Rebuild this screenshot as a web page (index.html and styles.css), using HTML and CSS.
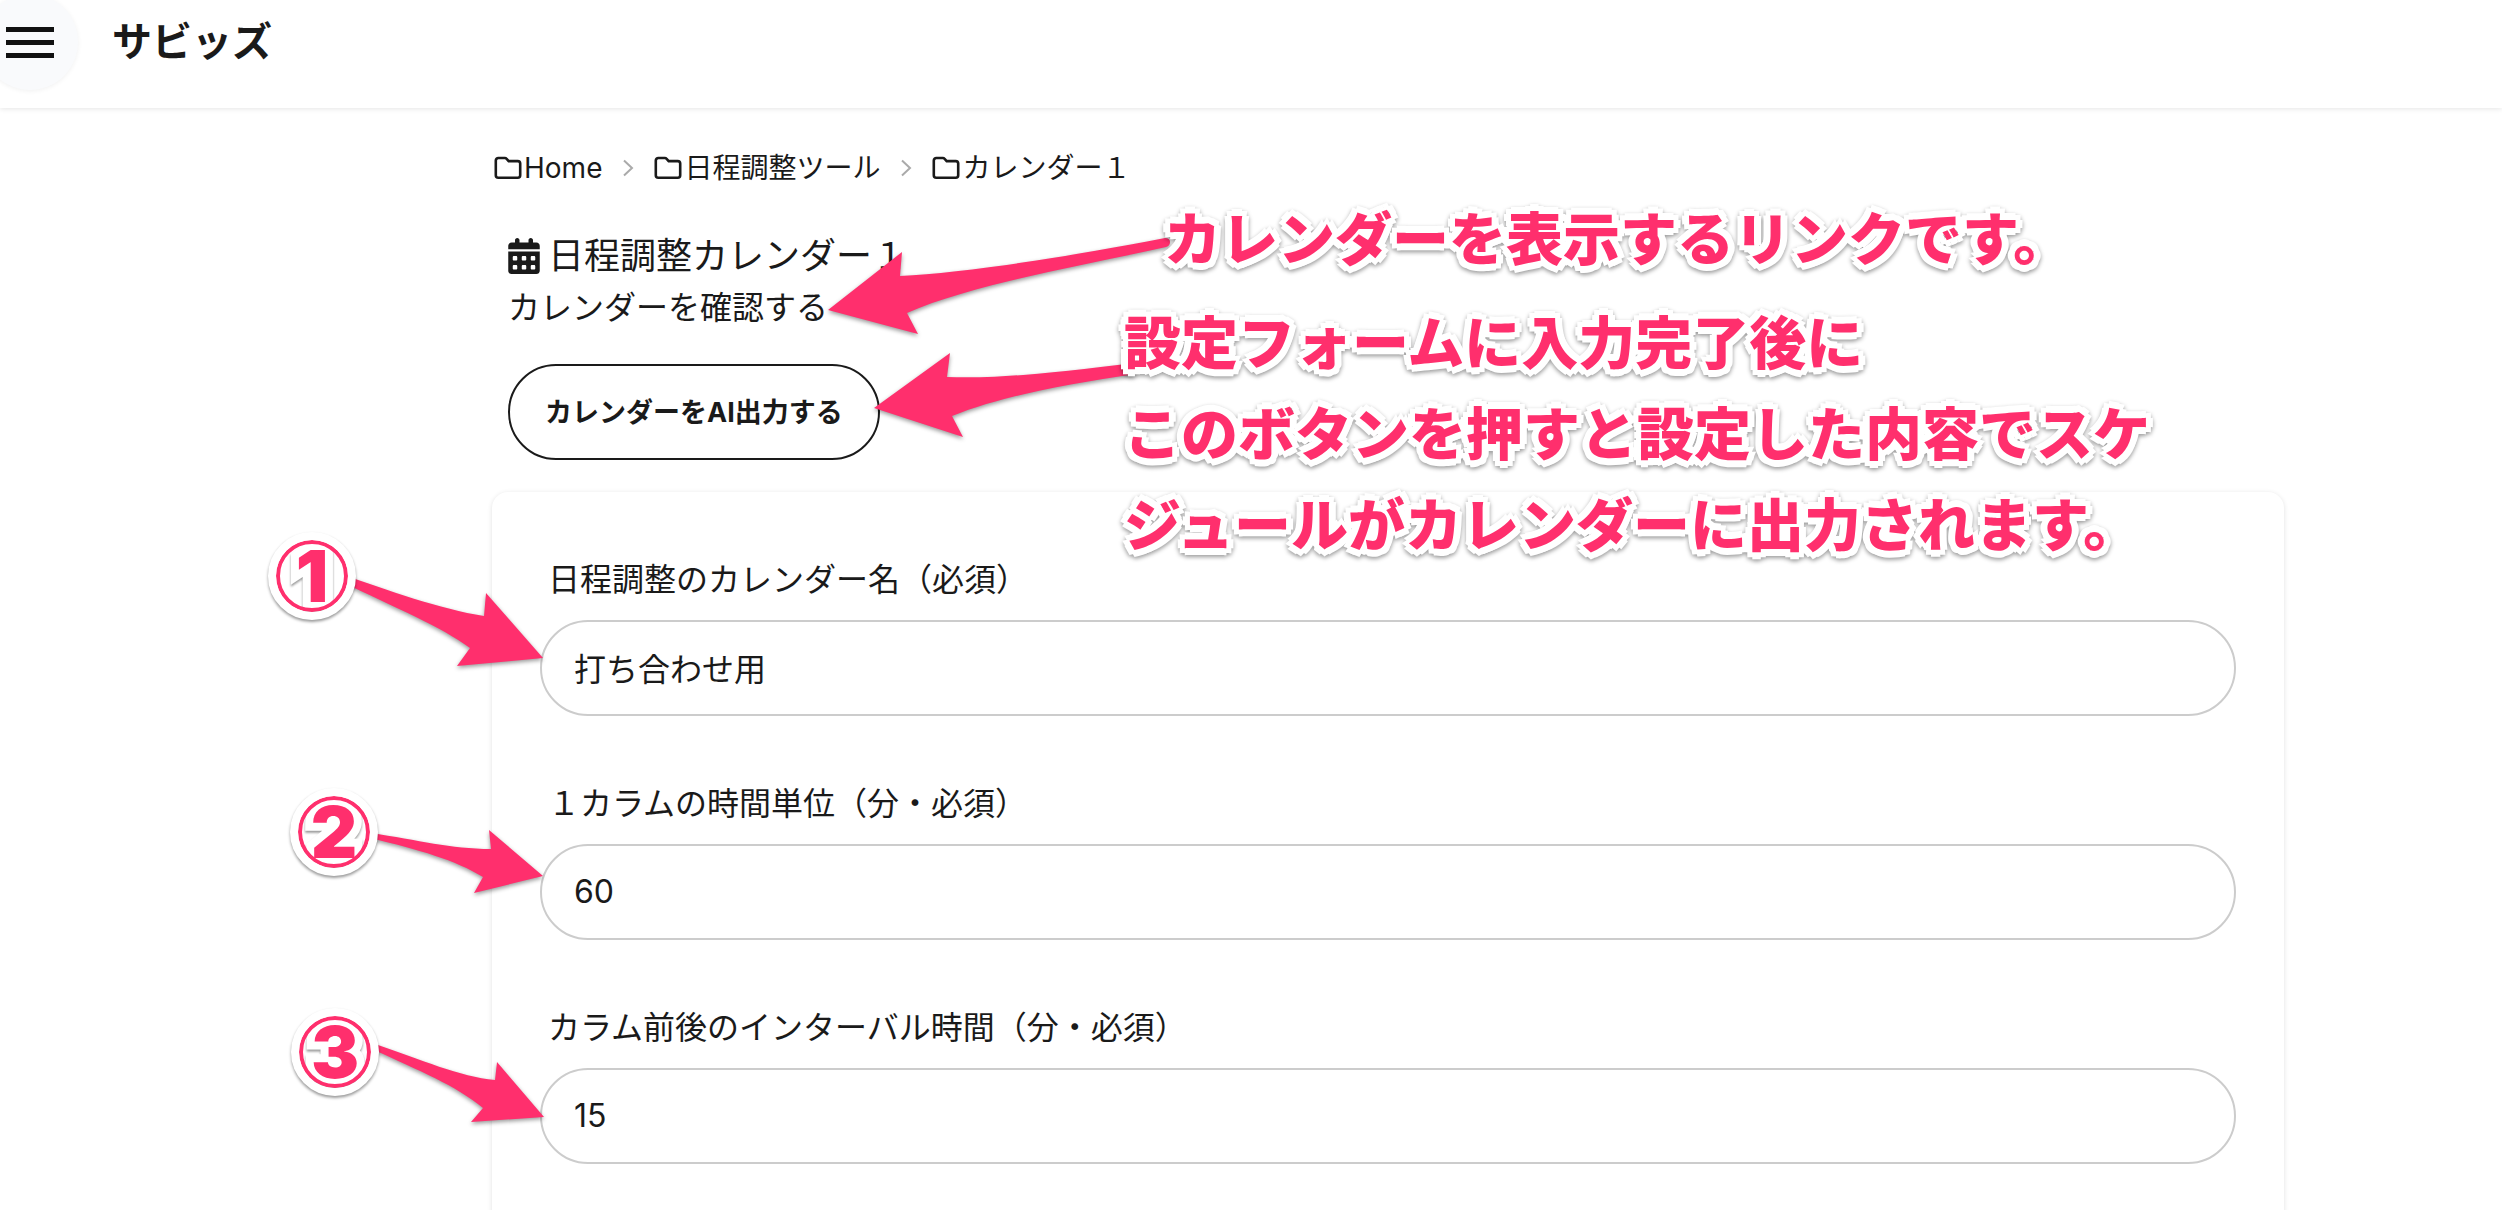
FILE: index.html
```html
<!DOCTYPE html>
<html lang="ja">
<head>
    <meta charset="UTF-8">
    <meta name="viewport" content="width=device-width, initial-scale=1.0">
    <title>サビッズ</title>
    <link rel="stylesheet" href="styles.css">
</head>
<body>
    <header class="header">
        <button type="button" class="menu-button" aria-label="menu">
            <span class="menu-line"></span>
            <span class="menu-line"></span>
            <span class="menu-line"></span>
        </button>
        <h1 class="site-name">サビッズ</h1>
    </header>

    <!-- folder icon used in the breadcrumb -->
    <svg class="symbols" aria-hidden="true">
        <symbol id="folder" viewBox="0 0 28 28">
            <path d="M1.800 6.500a2.500 2.500 0 0 1 2.500-2.500h6.600a2 2 0 0 1 1.500.7l2.300 2.400h9a2.500 2.500 0 0 1 2.500 2.500v11.700a2.500 2.500 0 0 1-2.500 2.500H4.300a2.500 2.500 0 0 1-2.500-2.500z" fill="none" stroke="#1a1a1a" stroke-width="2.600"/>
        </symbol>
        <symbol id="chevron" viewBox="0 0 14 20">
            <path d="M3 2.500l8 7.500-8 7.500" fill="none" stroke="#aaa" stroke-width="2"/>
        </symbol>
    </svg>

    <main class="main">
        <nav class="breadcrumb">
            <a href="#"><svg class="folder"><use href="#folder"/></svg>Home</a>
            <svg class="chevron"><use href="#chevron"/></svg>
            <a href="#"><svg class="folder"><use href="#folder"/></svg>日程調整ツール</a>
            <svg class="chevron"><use href="#chevron"/></svg>
            <a href="#"><svg class="folder"><use href="#folder"/></svg>カレンダー１</a>
        </nav>

        <div class="intro">
            <h2 class="page-title">
                <svg class="calendar" viewBox="0 0 448 512"><path fill="#1a1a1a" d="M128 0c17.700 0 32 14.300 32 32v32h128V32c0-17.700 14.300-32 32-32s32 14.300 32 32v32h48c26.500 0 48 21.500 48 48v48H0v-48c0-26.500 21.500-48 48-48h48V32c0-17.700 14.300-32 32-32zM0 192h448v272c0 26.500-21.500 48-48 48H48c-26.500 0-48-21.500-48-48zm64 80v32c0 8.800 7.200 16 16 16h32c8.800 0 16-7.200 16-16v-32c0-8.800-7.200-16-16-16H80c-8.800 0-16 7.200-16 16zm128 0v32c0 8.800 7.200 16 16 16h32c8.800 0 16-7.200 16-16v-32c0-8.800-7.200-16-16-16h-32c-8.800 0-16 7.200-16 16zm144-16c-8.800 0-16 7.200-16 16v32c0 8.800 7.200 16 16 16h32c8.800 0 16-7.200 16-16v-32c0-8.800-7.200-16-16-16zM64 400v32c0 8.800 7.200 16 16 16h32c8.800 0 16-7.200 16-16v-32c0-8.800-7.200-16-16-16H80c-8.800 0-16 7.200-16 16zm144-16c-8.800 0-16 7.200-16 16v32c0 8.800 7.200 16 16 16h32c8.800 0 16-7.200 16-16v-32c0-8.800-7.200-16-16-16zm112 16v32c0 8.800 7.200 16 16 16h32c8.800 0 16-7.200 16-16v-32c0-8.800-7.200-16-16-16h-32c-8.800 0-16 7.200-16 16z"/></svg>
                日程調整カレンダー１
            </h2>
            <a class="confirm-link" href="#">カレンダーを確認する</a>
            <button type="button" class="output-button">カレンダーをAI出力する</button>
        </div>

        <form class="card">
            <div class="field">
                <label for="calendar-name">日程調整のカレンダー名（必須）</label>
                <input type="text" id="calendar-name" name="calendar-name" value="打ち合わせ用" required>
            </div>
            <div class="field">
                <label for="column-minutes">１カラムの時間単位（分・必須）</label>
                <input type="text" id="column-minutes" name="column-minutes" value="60" required>
            </div>
            <div class="field">
                <label for="interval-minutes">カラム前後のインターバル時間（分・必須）</label>
                <input type="text" id="interval-minutes" name="interval-minutes" value="15" required>
            </div>
        </form>
    </main>

    <!-- guide arrows and notes drawn over the page -->
    <div class="guide">
        <svg class="arrows" viewBox="0 0 2502 1210" fill="#ff2f6d">
            <path d="M828 310L902 252L900 276C960 273 1050 260 1165 238Q1170 238 1170 242Q1170 246 1166 247C1080 266 970 285 907 313L918 334Z"/>
            <path d="M874 408L950 353L947 377C1000 379 1060 372 1135 363V374C1070 384 1000 396 952 416L963 437Z"/>
            <path d="M543 658L486 593L484 616C440 609 390 591 338 573Q334 577 338 580C400 610 440 626 470 648L457 666Z"/>
            <path d="M543 876L489 830L491 849C450 849 420 840 370 833V838C420 850 455 860 483 877L474 893Z"/>
            <path d="M544 1117L497 1062L495 1080C460 1077 420 1059 378 1045L374 1050C420 1071 455 1085 483 1108L471 1122Z"/>
        </svg>
        <p class="note note-link">カレンダーを表示するリンクです。</p>
        <p class="note note-button">設定フォームに入力完了後に<br>このボタンを押すと設定した内容でスケ<br>ジュールがカレンダーに出力されます。</p>
        <div class="step step-1"><span>1</span></div>
        <div class="step step-2"><span>2</span></div>
        <div class="step step-3"><span>3</span></div>
    </div>
</body>
</html>
```

FILE: styles.css
```css
* {
    box-sizing: border-box;
}
body {
    font-family: Inter, "Noto Sans CJK JP", sans-serif;
    margin: 0;
    position: relative;
    height: 100vh;
    overflow: hidden;
    background-color: #ffffff;
    color: #1a1a1a;
}
a {
    color: inherit;
    text-decoration: none;
}
.header {
    display: flex;
    align-items: center;
    gap: 34px;
    height: 108px;
    padding-bottom: 24px;
    box-shadow: 0 1px 5px rgba(0, 0, 0, 0.1);
}
.menu-button {
    width: 96px;
    height: 96px;
    margin-left: -18px;
    padding: 0 24px;
    display: flex;
    flex-direction: column;
    justify-content: center;
    gap: 8px;
    flex-shrink: 0;
    border: none;
    border-radius: 50%;
    background-color: #f9fafc;
    box-shadow: 0 1px 5px rgba(0, 0, 0, 0.06);
    cursor: pointer;
}
.menu-line {
    height: 5px;
    background-color: #111111;
}
.site-name {
    margin: 0;
    font-size: 40px;
    line-height: 48px;
}
.symbols {
    display: none;
}
.main {
    padding: 40px 218px 0 492px;
}
.breadcrumb {
    display: flex;
    align-items: center;
    padding-left: 2px;
    font-size: 28px;
    line-height: 40px;
}
.breadcrumb a {
    display: flex;
    align-items: center;
    gap: 2px;
}
.folder {
    width: 28px;
    height: 28px;
}
.chevron {
    width: 14px;
    height: 20px;
    margin: 0 19px;
}
.intro {
    display: flex;
    flex-direction: column;
    align-items: flex-start;
    padding: 42px 16px 32px;
}
.page-title {
    display: flex;
    align-items: center;
    gap: 8px;
    margin: 0;
    font-size: 36px;
    font-weight: 400;
    line-height: 52px;
}
.calendar {
    width: 32px;
    height: 36px;
}
.confirm-link {
    font-size: 32px;
    line-height: 52px;
}
.output-button {
    height: 96px;
    margin-top: 30px;
    padding: 0 35px 4px;
    border: 2px solid #1a1a1a;
    border-radius: 48px;
    background-color: #ffffff;
    color: #1a1a1a;
    font-family: inherit;
    font-size: 27px;
    font-weight: 700;
    cursor: pointer;
}
.card {
    display: flex;
    flex-direction: column;
    gap: 64px;
    padding: 64px 48px;
    border-radius: 16px;
    box-shadow: 0 1px 5px rgba(0, 0, 0, 0.12);
}
.field label {
    display: block;
    padding-left: 8px;
    margin-bottom: 16px;
    font-size: 32px;
    line-height: 48px;
}
.field input {
    display: block;
    width: 100%;
    height: 96px;
    padding: 0 32px 2px;
    border: 2px solid #cccccc;
    border-radius: 48px;
    background-color: #ffffff;
    color: #1a1a1a;
    font-family: inherit;
    font-size: 32px;
}
.guide {
    position: absolute;
    top: 0;
    left: 0;
    pointer-events: none;
}
.arrows {
    display: block;
    width: 2502px;
    height: 1210px;
    filter: drop-shadow(0 2px 2px rgba(0, 0, 0, 0.4));
}
.note {
    position: absolute;
    margin: 0;
    white-space: nowrap;
    color: #ff2f6d;
    font-family: "Noto Sans CJK JP", sans-serif;
    font-size: 57px;
    font-weight: 900;
    line-height: 91px;
    text-shadow: 7px 0 #ffffff, -7px 0 #ffffff, 0 7px #ffffff, 0 -7px #ffffff,
        5px 5px #ffffff, -5px 5px #ffffff, 5px -5px #ffffff, -5px -5px #ffffff;
    filter: drop-shadow(0 2px 2px rgba(0, 0, 0, 0.4));
}
.note-link {
    left: 1164px;
    top: 190px;
}
.note-button {
    left: 1124px;
    top: 294px;
}
.step {
    position: absolute;
    width: 88px;
    height: 88px;
    display: flex;
    align-items: center;
    justify-content: center;
    overflow: hidden;
    border: 8px solid #ffffff;
    border-radius: 50%;
    background-color: #ffffff;
    box-shadow: 0 2px 3px rgba(0, 0, 0, 0.4);
    font-size: 72px;
    font-weight: 900;
    line-height: 72px;
}
.step span {
    color: #ff2f6d;
    -webkit-text-stroke: 16px #ffffff;
    paint-order: stroke fill;
    filter: drop-shadow(0 2px 1px rgba(0, 0, 0, 0.4));
}
.step::after {
    content: "";
    position: absolute;
    inset: 0;
    border: 4px solid #ff2f6d;
    border-radius: 50%;
}
.step-1 {
    left: 268px;
    top: 532px;
}
.step-2 {
    left: 290px;
    top: 788px;
}
.step-3 {
    left: 291px;
    top: 1008px;
}
```
